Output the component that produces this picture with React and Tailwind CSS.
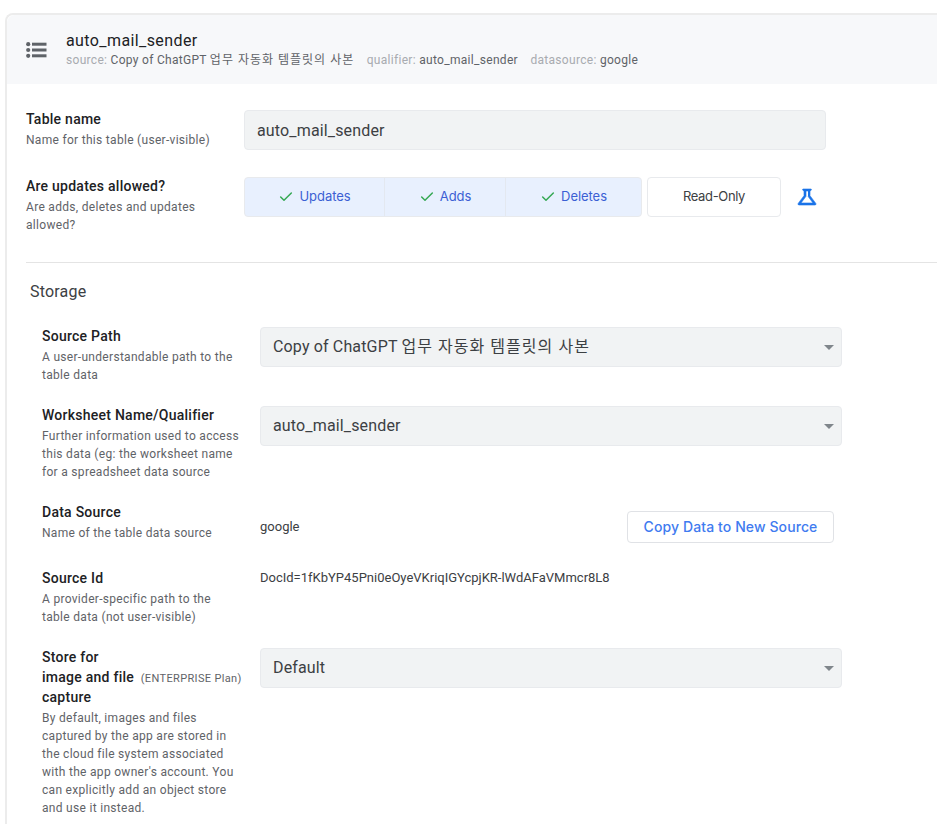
import React from 'react';
import { Check } from 'lucide-react';

const cjk = "font-['Roboto','Noto_Sans_CJK_KR',sans-serif]";

const Label = ({ title, children }) => (
  <div className="shrink-0 w-[218px] -mt-[1px]">
    <div className="text-[14px] leading-[21px] font-medium text-[#202124] tracking-[0.25px]">{title}</div>
    <div className="mt-[1px] text-[12px] leading-[18px] text-[#5f6368] tracking-[0.3px] pr-[20px]">{children}</div>
  </div>
);

const SelectBox = ({ children }) => (
  <div className="w-[582px] h-[40px] flex items-center justify-between pl-[12px] pr-[7px] bg-[#f1f3f4] border border-[#e8eaed] rounded text-[16px] text-[#3c4043] tracking-[0.15px]">
    <span>{children}</span>
    <span className="w-0 h-0 border-x-[5px] border-x-transparent border-t-[5px] border-t-[#80868b]" />
  </div>
);

const Toggle = ({ children, last }) => (
  <div className={`flex-1 flex items-center justify-center gap-[5px] text-[13px] font-['Inter',sans-serif] tracking-[-0.05px] text-[#3b5fd4] ${last ? '' : 'border-r border-[#e3e8f0]'}`}>
    <Check size={16} strokeWidth={2.2} className="text-[#34a853]" />
    {children}
  </div>
);

export default function App() {
  return (
    <div className={`h-[824px] overflow-hidden bg-white pt-[13px] pl-[5px] ${cjk}`}>
      <div className="border-l-2 border-t-2 border-[#ececec] rounded-tl-lg h-full">
        <div className="h-[69px] bg-[#f7f8fa] flex items-center pl-[19px] rounded-tl-lg">
          <svg width="21" height="16" viewBox="0 0 21 16" className="shrink-0 text-[#5f6368]" fill="currentColor">
            <circle cx="2.2" cy="2.2" r="2.1" />
            <circle cx="2.2" cy="8" r="2.1" />
            <circle cx="2.2" cy="13.8" r="2.1" />
            <rect x="6" y="0.7" width="14.5" height="3" />
            <rect x="6" y="6.5" width="14.5" height="3" />
            <rect x="6" y="12.3" width="14.5" height="3" />
          </svg>
          <div className="ml-[19px]">
            <div className="text-[16px] leading-[20px] text-[#202124] tracking-[0.4px]">auto_mail_sender</div>
            <div className="flex gap-[12.5px] text-[12px] leading-[18px] text-[#5f6368] tracking-[0.3px]">
              <span><span className="text-[#a8abb0]">source:</span> Copy of ChatGPT <span className="tracking-[1px]">업무 자동화 템플릿의 사본</span></span>
              <span><span className="text-[#a8abb0]">qualifier:</span> auto_mail_sender</span>
              <span><span className="text-[#a8abb0]">datasource:</span> google</span>
            </div>
          </div>
        </div>

        <div className="pl-[19px]">
          <div className="flex pt-[26px]">
            <Label title="Table name">Name for this table (user-visible)</Label>
            <div className="w-[582px] h-[40px] flex items-center px-[12px] pt-[1px] bg-[#f1f3f4] border border-[#e8eaed] rounded text-[16px] text-[#3c4043] tracking-[0.15px]">
              auto_mail_sender
            </div>
          </div>

          <div className="flex pt-[27px]">
            <Label title="Are updates allowed?">Are adds, deletes and updates allowed?</Label>
            <div className="flex items-center h-[40px]">
              <div className="w-[398px] h-full flex bg-[#e8f0fe] border border-[#e8eaed] rounded">
                <div className="w-[140px] flex"><Toggle>Updates</Toggle></div>
                <div className="w-[121px] flex"><Toggle>Adds</Toggle></div>
                <div className="flex-1 flex"><Toggle last>Deletes</Toggle></div>
              </div>
              <div className="ml-[5px] w-[134px] h-full flex items-center justify-center border border-[#e8eaed] rounded text-[13px] font-['Inter',sans-serif] tracking-[-0.35px] text-[#3c4043]">
                Read-Only
              </div>
              <svg width="24" height="24" viewBox="0 0 24 24" className="ml-[14px] text-[#1a73e8]" fill="currentColor" stroke="currentColor" strokeWidth="0.6">
                <path d="M13 11.33 18 18H6l5-6.67V6h2m2.96-2H8.04c-.42 0-.65.48-.39.81L9 6.5v4.17L3.2 18.4c-.49.66-.02 1.6.8 1.6h16c.82 0 1.29-.94.8-1.6L15 10.67V6.5l1.35-1.69c.26-.33.03-.81-.39-.81z" />
              </svg>
            </div>
          </div>

          <div className="border-t border-[#e4e4e4] mt-[28px]" />

          <div className="pl-[4px] pt-[18px] text-[16px] leading-[22px] text-[#3c4043] tracking-[0.2px]">Storage</div>

          <div className="pl-[16px]">
            <div className="flex pt-[24px]">
              <Label title="Source Path">A user-understandable path to the table data</Label>
              <SelectBox>Copy of ChatGPT <span className="tracking-[1.05px]">업무 자동화 템플릿의 사본</span></SelectBox>
            </div>

            <div className="flex pt-[22px]">
              <Label title="Worksheet Name/Qualifier">Further information used to access this data (eg: the worksheet name for a spreadsheet data source</Label>
              <SelectBox>auto_mail_sender</SelectBox>
            </div>

            <div className="flex pt-[22px]">
              <Label title="Data Source">Name of the table data source</Label>
              <div className="w-[574px] flex justify-between items-center h-[32px] mt-[8px] text-[13px] text-[#3c4043]">
                <span>google</span>
                <div className="w-[207px] h-[32px] flex items-center justify-center pb-[1px] bg-white border border-[#e0e2e6] rounded text-[14px] font-medium font-['Inter',sans-serif] text-[#3f7bf0] tracking-[0.1px]">
                  Copy Data to New Source
                </div>
              </div>
            </div>

            <div className="flex pt-[26px]">
              <Label title="Source Id">A provider-specific path to the table data (not user-visible)</Label>
              <div className="text-[13px] leading-[20px] text-[#3c4043] -mt-[1px]">DocId=1fKbYP45Pni0eOyeVKriqIGYcpjKR-lWdAFaVMmcr8L8</div>
            </div>

            <div className="flex pt-[22px]">
              <div className="shrink-0 w-[218px] -mt-[1px]">
                <div className="text-[14px] leading-[20px] font-medium text-[#202124] tracking-[0.25px]">
                  <div>Store for</div>
                  <div className="h-[20px]">image and file <span className="ml-[3px] text-[11px] leading-none font-normal text-[#5f6368] tracking-[0.35px]">(ENTERPRISE Plan)</span></div>
                  <div>capture</div>
                </div>
                <div className="mt-[2px] text-[12px] leading-[18px] text-[#5f6368] tracking-[0.3px] pr-[20px]">
                  By default, images and files captured by the app are stored in the cloud file system associated with the app owner's account. You can explicitly add an object store and use it instead.
                </div>
              </div>
              <SelectBox>Default</SelectBox>
            </div>
          </div>
        </div>
      </div>
    </div>
  );
}
